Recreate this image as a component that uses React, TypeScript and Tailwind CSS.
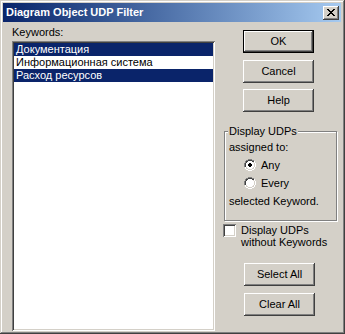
import React from "react";

const FONT = { fontFamily: '"Liberation Sans", Arial, sans-serif' };

const raised =
    "shadow-[inset_-1px_-1px_#404040,inset_1px_1px_#ffffff,inset_-2px_-2px_#808080,inset_2px_2px_#d4d0c8]";
const sunken =
    "shadow-[inset_1px_1px_#808080,inset_-1px_-1px_#ffffff,inset_2px_2px_#404040,inset_-2px_-2px_#d4d0c8]";

function Button({ label, isDefault, className }: { label: string; isDefault?: boolean; className?: string }) {
    if (isDefault) {
        return (
            <div className={`w-[71px] h-[23px] border border-black bg-[#d4d0c8] ${className ?? ""}`}>
                <div className={`w-full h-full flex items-center justify-center text-[11px] text-black ${raised}`}>
                    {label}
                </div>
            </div>
        );
    }
    return (
        <div
            className={`w-[71px] h-[23px] bg-[#d4d0c8] flex items-center justify-center text-[11px] text-black ${raised} ${className ?? ""}`}
        >
            {label}
        </div>
    );
}

function Radio({ checked }: { checked?: boolean }) {
    return (
        <svg width="12" height="12" viewBox="0 0 12 12" shapeRendering="crispEdges">
            {/* outer ring: dark top-left, white bottom-right */}
            <path d="M4 0h4v1H4zM2 1h2v1H2zM8 1h2v1H8zM1 2h1v2H1zM0 4h1v4H0z" fill="#808080" />
            <path d="M10 2h1v2h-1zM11 4h1v4h-1zM10 8h1v2h-1zM8 10h2v1H8zM4 11h4v1H4zM2 10h2v1H2zM1 8h1v2H1z" fill="#ffffff" />
            <path d="M4 1h4v1H4zM2 2h2v1H2zM8 2h2v1H8zM2 3h1v1H2zM1 4h1v4H1z" fill="#404040" />
            <path d="M9 3h1v1H9zM10 4h1v4h-1zM9 8h1v1H9zM8 9h2v1H8zM4 10h4v1H4zM2 9h2v1H2zM2 8h1v1H2z" fill="#d4d0c8" />
            <path d="M4 2h4v1h1v1h1v4H9v1H8v1H4V9H3V8H2V4h1V3h1z" fill="#ffffff" />
            {checked && <path d="M5 4h2v1h1v2H7v1H5V7H4V5h1z" fill="#000000" />}
        </svg>
    );
}

export default function App() {
    const items = [
        { label: "Документация", selected: true },
        { label: "Информационная система", selected: false },
        { label: "Расход ресурсов", selected: true },
    ];

    return (
        <div
            style={FONT}
            className="w-[345px] h-[334px] bg-[#d4d0c8] flex flex-col pt-[3px] pl-[3px] pr-[4px] shadow-[inset_-1px_-1px_#404040,inset_1px_1px_#d4d0c8,inset_-2px_-2px_#808080,inset_2px_2px_#ffffff] overflow-hidden"
        >
            {/* title bar */}
            <div className="h-[19px] flex items-center pl-[3px] pr-[2px] bg-gradient-to-r from-[#0a246a] to-[#a6caf0]">
                <span className="text-white font-bold text-[11px] leading-[13px]">Diagram Object UDP Filter</span>
                <div className={`ml-auto w-[16px] h-[14px] bg-[#d4d0c8] flex items-center justify-center ${raised}`}>
                    <svg width="8" height="7" viewBox="0 0 8 7" shapeRendering="crispEdges" className="ml-[-1px] mt-[-1px]">
                        <path
                            d="M0 0h2v1h1v1h2V1h1V0h2v1H7v1H6v1H5v1h1v1h1v1h1v1H6V6H5V5H3v1H2v1H0V6h1V5h1V4h1V3H2V2H1V1H0z"
                            fill="#000"
                        />
                    </svg>
                </div>
            </div>

            {/* body */}
            <div className="flex flex-1 text-[11px] text-black">
                {/* left column */}
                <div className="ml-[9px] flex flex-col">
                    <div className="mt-[4px] h-[13px] leading-[13px]">Keywords:</div>
                    <div className={`mt-[2px] w-[203px] h-[290px] bg-white p-[2px] ${sunken}`}>
                        {items.map((it) => (
                            <div
                                key={it.label}
                                className={`h-[13px] leading-[13px] pl-[2px] whitespace-nowrap ${
                                    it.selected ? "bg-[#0a246a] text-white" : "text-black"
                                }`}
                            >
                                {it.label}
                            </div>
                        ))}
                    </div>
                </div>

                {/* right column */}
                <div className="ml-[8px] w-[114px] flex flex-col">
                    <Button label="OK" isDefault className="mt-[8px] ml-[20px]" />
                    <Button label="Cancel" className="mt-[7px] ml-[20px]" />
                    <Button label="Help" className="mt-[6px] ml-[20px]" />

                    <fieldset className="mt-[13px] ml-[1px] w-[113px] border border-[#808080] shadow-[inset_1px_1px_#ffffff,1px_1px_#ffffff] px-[4px] pb-[10px]">
                        <legend className="bg-[#d4d0c8] h-[13px] leading-[13px] px-[1px] ml-[-1px]">Display UDPs</legend>
                        <div className="h-[18px] leading-[18px]">assigned to:</div>
                        <div className="h-[18px] flex items-center">
                            <div className="ml-[15px]">
                                <Radio checked />
                            </div>
                            <span className="ml-[5px]">Any</span>
                        </div>
                        <div className="h-[18px] flex items-center">
                            <div className="ml-[15px]">
                                <Radio />
                            </div>
                            <span className="ml-[5px]">Every</span>
                        </div>
                        <div className="h-[18px] leading-[18px]">selected Keyword.</div>
                    </fieldset>

                    <div className="mt-[3px] flex items-start">
                        <div className={`w-[13px] h-[13px] bg-white ${sunken}`} />
                        <div className="ml-[5px] leading-[12px]">
                            <div>Display UDPs</div>
                            <div>without Keywords</div>
                        </div>
                    </div>

                    <Button label="Select All" className="mt-[15px] ml-[21px]" />
                    <Button label="Clear All" className="mt-[7px] ml-[21px]" />
                </div>
            </div>
        </div>
    );
}
